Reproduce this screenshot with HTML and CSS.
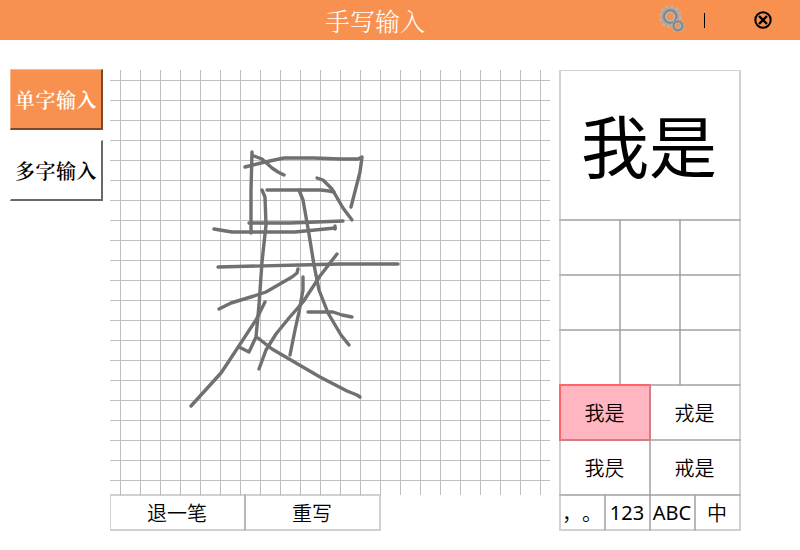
FILE: index.html
```html
<!DOCTYPE html>
<html lang="zh-CN">
<head>
<meta charset="utf-8">
<title>手写输入</title>
<link rel="stylesheet" href="styles.css">
</head>
<body>
<header class="bar">
  <h1 class="title">手写输入</h1>
  <div class="tools">
    <svg class="gear" width="28" height="30" viewBox="0 0 28 30">
      <circle cx="11.2" cy="11.6" r="10" fill="none" stroke="#bab5af" stroke-width="2.8" stroke-dasharray="2.9 2.34"/>
      <circle cx="11.2" cy="11.6" r="6.7" fill="none" stroke="#aaa9a7" stroke-width="5.4"/>
      <circle cx="11.2" cy="11.6" r="6.2" fill="none" stroke="#808689" stroke-width="2.2"/>
      <circle cx="11.2" cy="11.6" r="4.4" fill="none" stroke="#c4c2be" stroke-width="1"/>
      <circle cx="19" cy="20.8" r="5.9" fill="none" stroke="#b9b5b0" stroke-width="2" stroke-dasharray="1.7 1.39"/>
      <circle cx="19" cy="20.8" r="4.1" fill="#f89150" stroke="#858a8c" stroke-width="3"/>
      <circle cx="19" cy="20.8" r="2.9" fill="none" stroke="#bcbcba" stroke-width=".9"/>
    </svg>
    <span class="divider"></span>
    <svg class="close" width="18" height="18" viewBox="0 0 18 18" fill="none" stroke="#000">
      <circle cx="9" cy="9" r="7.7" stroke-width="2"/>
      <path d="M5 5 13 13M13 5 5 13" stroke-width="2.4"/>
    </svg>
  </div>
</header>
<main class="main">
  <nav class="modes">
    <button class="mode active">单字输入</button>
    <button class="mode">多字输入</button>
  </nav>
  <section class="pad">
    <div class="canvas">
      <svg class="ink" width="440" height="425" viewBox="110 70 440 425">
        <path d="M252 152 251 190 251 233"/>
        <path d="M245 167 265 162 284 158 314 158 340 159 358 159 362 157 360 172 351 207"/>
        <path d="M254 156 262 159 272 168 278 172 284 175"/>
        <path d="M317 178 323 180 332 189 343 208 352 220"/>
        <path d="M267 190 321 190 329 191 334 192"/>
        <path d="M262 190 265 197 266 225 262 262 259 305 256 337 249 352 239 347"/>
        <path d="M299 190 303 200 309 234 314 265 319 290 328 313 341 335 349 345"/>
        <path d="M249 223 290 223 343 221"/>
        <path d="M214 229 232 232 295 232 335 228"/>
        <path d="M335 226v3"/>
        <path d="M218 267 300 265 340 264 398 264"/>
        <path d="M219 309 231 303 254 296 266 292 292 277 297 273 298 269"/>
        <path d="M337 254 320 276 303 302 289 318 276 334 266 350 259 369"/>
        <path d="M303 277 303 290 299 312 295 330 290 355"/>
        <path d="M308 312 333 312 342 315 352 317"/>
        <path d="M265 302 256 320 229 361 221 373 191 406"/>
        <path d="M258 338 272 349 320 377 347 391 357 395 360 397"/>
      </svg>
    </div>
    <div class="actions">
      <button class="cell undo">退一笔</button>
      <button class="cell">重写</button>
    </div>
  </section>
  <aside class="panel">
    <div class="cell preview">我是</div>
    <div class="chars">
      <div class="cell"></div><div class="cell"></div><div class="cell"></div>
      <div class="cell"></div><div class="cell"></div><div class="cell"></div>
      <div class="cell"></div><div class="cell"></div><div class="cell"></div>
    </div>
    <div class="words">
      <button class="cell selected">我是</button><button class="cell">戎是</button>
      <button class="cell">我昃</button><button class="cell">戒是</button>
    </div>
    <div class="kinds">
      <button class="cell punct">，。</button><button class="cell latin">123</button>
      <button class="cell latin">ABC</button><button class="cell">中</button>
    </div>
  </aside>
</main>
</body>
</html>
```
FILE: styles.css
```css
* { box-sizing: border-box; }
body {
  margin: 0;
  width: 800px;
  height: 550px;
  overflow: hidden;
  background: #fff;
  color: #000;
  font-family: "Noto Sans CJK SC", sans-serif;
}
button { appearance: none; margin: 0; padding: 0; border-radius: 0; background: none; color: inherit; font: inherit; }

.bar {
  display: grid;
  grid-template-columns: 325px auto 1fr;
  align-items: center;
  height: 40px;
  background: #f89150;
}
.title {
  grid-column: 2;
  margin: 0;
  color: #fff;
  font: 300 25px/38px "Noto Serif CJK SC", "Noto Sans CJK SC", serif;
}
.tools { grid-column: 3; display: flex; align-items: center; justify-content: flex-end; padding-right: 28px; }
.gear { display: block; margin-right: 17px; }
.divider { width: 1px; height: 15px; margin-right: 49px; background: #000; }
.close { display: block; }

.main { display: flex; align-items: flex-start; padding: 29px 0 0 10px; }
.modes { display: flex; flex-direction: column; gap: 10px; width: 100px; }
.mode {
  width: 93px;
  height: 61px;
  padding-top: 2px;
  border: solid;
  border-width: 1px 2px 2px 1px;
  border-color: #fff #696969 #696969 #fff;
  font: 600 20px/56px "Noto Serif CJK SC", "Noto Sans CJK SC", serif;
  letter-spacing: .5px;
}
.mode.active { border-color: #fbb78c #7c4828 #7c4828 #fbb78c; background: #f89150; color: #fff; }

.pad { width: 440px; margin: 1px 9px 0 0; }
.canvas {
  height: 425px;
  background:
    linear-gradient(90deg, #bebebe 1px, transparent 1px) 10px 0 / 20px 20px,
    linear-gradient(#bebebe 1px, transparent 1px) 0 10px / 20px 20px;
}
.ink { display: block; fill: none; stroke: #707070; stroke-width: 3.4; stroke-linecap: round; stroke-linejoin: round; }
.cell {
  display: flex;
  align-items: center;
  justify-content: center;
  border: 2px solid rgba(155, 155, 158, .46);
  margin: 0 -2px -2px 0;
  padding-right: 1px;
  font-size: 20px;
  font-weight: 350;
  white-space: nowrap;
  line-height: 30px;
}
.actions { display: grid; grid-template: 35px / 134px 135px; margin-top: -1px; }
.undo { border-left-width: 1px; }

.panel { width: 182px; margin-top: 1px; padding: 0 2px 2px 0; }
.preview { height: 151px; padding: 0 2px 2px 0; border-top-width: 1px; font-size: 68px; font-weight: 400; }
.chars { display: grid; grid-template: repeat(3, 55px) / repeat(3, 60px); }
.words { display: grid; grid-template: repeat(2, 55px) / repeat(2, 90px); }
.kinds { display: grid; grid-template: 35px / repeat(4, 45px); }
.selected { border-color: rgba(255, 0, 0, .45); background: #ffb6c1; }
.punct { text-spacing-trim: space-all; }
.latin { font-family: "Noto Sans", sans-serif; font-weight: 400; }
```
